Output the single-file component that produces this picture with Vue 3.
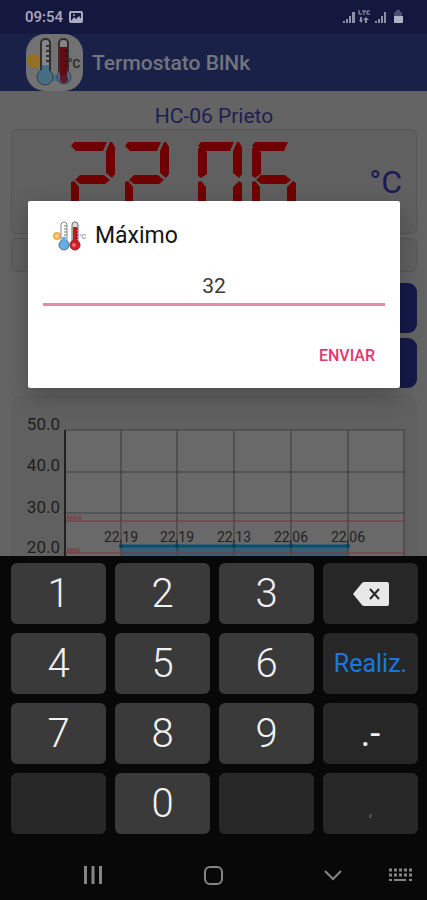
<script setup>
import { ref } from 'vue'

const maximum = ref('32')

const segments = {
  a: '0,4 3,0 36,0 32,9 5,9',
  b: '39,0 41,0 44,5 44,32 41,36 35,31 35,9',
  c: '41,39 44,41 44,70 35,66 35,45',
  d: '5,67 33,67 38,76 3,76',
  e: '0,40 3,39 8,45 8,66 0,72',
  f: '0,6 2,6 9,10 9,32 3,36 0,34',
  g: '4,38 9,33 33,33 39,38 34,42 9,42'
}
const digits = [
  { x: 59, on: 'abged' },
  { x: 113, on: 'abged' },
  { x: 186, on: 'abcdef' },
  { x: 240, on: 'afgcde' }
]

const points = [
  { x: 110, label: '22,19' },
  { x: 166, label: '22,19' },
  { x: 223, label: '22,13' },
  { x: 280, label: '22,06' },
  { x: 337, label: '22,06' }
]
const levels = [
  { y: 35, label: '50.0' },
  { y: 76, label: '40.0' },
  { y: 118, label: '30.0' },
  { y: 158, label: '20.0' }
]

const keys = [
  { text: '1', kind: 'digit' },
  { text: '2', kind: 'digit' },
  { text: '3', kind: 'digit' },
  { text: '', kind: 'side', icon: true, name: 'Borrar' },
  { text: '4', kind: 'digit' },
  { text: '5', kind: 'digit' },
  { text: '6', kind: 'digit' },
  { text: 'Realiz.', kind: 'side done' },
  { text: '7', kind: 'digit' },
  { text: '8', kind: 'digit' },
  { text: '9', kind: 'digit' },
  { text: '.-', kind: 'side symbols' },
  { text: '', kind: 'side', name: 'Vacío' },
  { text: '0', kind: 'digit' },
  { text: '', kind: 'side', name: 'Vacío' },
  { text: ',', kind: 'side comma' }
]

function press(key) {
  if (key.kind === 'digit') maximum.value += key.text
  else if (key.icon) maximum.value = maximum.value.slice(0, -1)
}
</script>

<template>
  <div class="phone">
    <div class="app">
      <div class="status">
        <span class="clock">09:54</span>
        <svg class="photo" viewBox="0 0 14 12">
          <rect x="1" y="1" width="12" height="10" rx="1" fill="none" stroke="currentColor" stroke-width="2" />
          <path d="M2 10l3-4 2 2 3-3 3 4v1z" fill="currentColor" />
          <circle cx="5" cy="4" r="1" fill="currentColor" />
        </svg>
        <svg class="signals" viewBox="0 0 62 14">
          <g fill="#8c90a6">
            <path d="M1 11h2v2H1zM4 9h2v4H4zM7 6h2v7H7zM10 2h3v11h-3z" />
            <path d="M33 11h2v2h-2zM36 9h2v4h-2zM39 6h2v7h-2zM42 2h2v11h-2z" />
            <path d="M23 13v-3h-2l3-3 3 3h-2v3zM18 7h2v3h1l-2 3-2-3h1z" />
            <path d="M17 0v4h3M20 1h4M22 1v4M28 1h-3v3h3" fill="none" stroke="#a4a7ba" stroke-width="1" />
          </g>
          <path d="M52 3q0-1 1-1h1V0h4v2h1q1 0 1 1v3h-8z" fill="#4c5071" />
          <path d="M52 6h9v6q0 1-1 1h-7q-1 0-1-1z" fill="#b0b3c4" />
        </svg>
      </div>

      <header class="toolbar">
        <svg class="logo" viewBox="0 0 57 57">
          <rect width="57" height="57" rx="19" fill="#727272" />
          <circle cx="8" cy="27" r="5" fill="#85724a" stroke="#a36f0b" stroke-width="3" />
          <path d="M8 24v6M6 27h4" stroke="#a36f0b" />
          <path d="M20 44h18" stroke="#466d84" stroke-width="6" />
          <rect x="15" y="5" width="9" height="38" rx="4" fill="#858585" stroke="#303030" stroke-width="2" />
          <circle cx="19" cy="43" r="8" fill="#466d84" stroke="#31424c" />
          <rect x="16" y="31" width="7" height="10" fill="#466d84" />
          <path d="M20 12h3M20 17h3M20 22h3M20 27h3" stroke="#303030" stroke-width="2" />
          <rect x="33" y="5" width="9" height="38" rx="4" fill="#858585" stroke="#303030" stroke-width="2" />
          <circle cx="38" cy="43" r="7" fill="#466d84" stroke="#31424c" />
          <rect x="34" y="13" width="7" height="31" fill="#640b12" />
          <circle cx="38" cy="45" r="4" fill="#5d1b28" />
          <path d="M39 17h3M39 22h3M39 27h3M39 32h3" stroke="#2a1215" stroke-width="2" />
          <text x="42" y="34" font-size="12" font-weight="500" fill="#252525">°C</text>
        </svg>
        <h1>Termostato BlNk</h1>
      </header>

      <main class="content">
        <p class="device">HC-06 Prieto</p>
        <section class="display">
          <svg class="segments" viewBox="0 0 300 103">
            <g v-for="d in digits" :key="d.x" :transform="`translate(${d.x} 12)`" fill="#700000">
              <polygon v-for="s in d.on" :key="s" :points="segments[s]" />
            </g>
            <circle cx="171" cy="84" r="4" fill="#700000" />
          </svg>
          <span class="unit">°C</span>
        </section>
        <div class="strip"></div>
        <div class="actions">
          <button type="button" aria-label="Máximo"></button>
          <button type="button" aria-label="Mínimo"></button>
        </div>
        <section class="panel">
          <svg class="chart" viewBox="0 0 406 200">
            <rect x="54" y="35" width="339" height="165" fill="#696969" />
            <path d="M110 151h227v49H110z" fill="#3b5e77" />
            <path d="M54 35h340M54 77h340M54 118h340" stroke="#414141" />
            <path d="M110 35v165M166 35v165M223 35v165M280 35v165M337 35v165M393 35v165" stroke="#3a3a3a" />
            <path d="M54 126h340M54 158h340" stroke="#78393b" />
            <path d="M110 151h227" stroke="#07506f" stroke-width="3" />
            <circle v-for="p in points" :key="'c' + p.x" :cx="p.x" cy="151" r="2" fill="#063e5d" />
            <path d="M54 35v165" stroke="#202020" stroke-width="2" />
            <text v-for="l in levels" :key="l.label" x="49" :y="l.y" text-anchor="end" class="level">{{ l.label }}</text>
            <text v-for="p in points" :key="'t' + p.x" :x="p.x" y="147" text-anchor="middle" class="reading">{{ p.label }}</text>
            <text x="56" y="125" class="limit">MAX</text>
            <text x="56" y="158" class="limit">MIN</text>
          </svg>
        </section>
      </main>

      <div class="overlay">
        <form class="dialog" role="dialog" aria-labelledby="dialog-title" @submit.prevent>
          <div class="heading">
            <svg class="thermo" viewBox="0 0 34 30">
              <circle cx="4" cy="15" r="3" fill="#fbd38d" stroke="#f5ad42" stroke-width="2" />
              <rect x="8" y="1" width="6" height="22" rx="3" fill="#fff" stroke="#8a8a8a" />
              <circle cx="11" cy="24" r="5" fill="#63aee5" stroke="#587080" />
              <path d="M9 16h4v8H9z" fill="#63aee5" />
              <path d="M11 5h3M11 8h3M11 11h3M11 14h3" stroke="#777" />
              <rect x="19" y="1" width="6" height="22" rx="3" fill="#ddd" stroke="#666" />
              <circle cx="22" cy="24" r="5" fill="#d91d28" stroke="#86242a" />
              <path d="M20 6h4v18h-4z" fill="#c91622" />
              <circle cx="21" cy="24" r="2" fill="#ef6a70" />
              <path d="M23 8h2M23 11h2M23 14h2M23 17h2" stroke="#641119" />
              <text x="26" y="18" font-size="7" fill="#777">°C</text>
            </svg>
            <label id="dialog-title" for="maximum">Máximo</label>
          </div>
          <input id="maximum" v-model="maximum" type="text" inputmode="decimal" />
          <button class="send" type="submit">ENVIAR</button>
        </form>
      </div>
    </div>

    <div class="keyboard">
      <button v-for="(key, i) in keys" :key="i" type="button" class="key" :class="key.kind" :aria-label="key.name" @click="press(key)">
        <svg v-if="key.icon" class="erase" viewBox="0 0 36 24">
          <path d="M0 12L9 1q1-1 2-1h23q2 0 2 2v20q0 2-2 2H11q-1 0-2-1z" fill="#e8e8e8" />
          <path d="M17 7l9 10M26 7l-9 10" stroke="#272727" stroke-width="2" />
        </svg>
        <template v-else>{{ key.text }}</template>
      </button>
    </div>

    <nav class="system">
      <div class="main-keys">
        <button type="button" aria-label="Recientes">
          <svg viewBox="0 0 24 24"><path d="M4.500 3v18M12 3v18M19.500 3v18" stroke="#858585" stroke-width="3" /></svg>
        </button>
        <button type="button" aria-label="Inicio">
          <svg viewBox="0 0 24 24"><rect x="4" y="4" width="17" height="17" rx="5" fill="none" stroke="#858585" stroke-width="2" /></svg>
        </button>
        <button type="button" aria-label="Ocultar teclado">
          <svg viewBox="0 0 24 24"><path d="M4 8l8 8 8-8" fill="none" stroke="#858585" stroke-width="2" /></svg>
        </button>
      </div>
      <button type="button" aria-label="Cambiar teclado">
        <svg viewBox="0 0 24 24">
          <g stroke="#858585" stroke-width="3" stroke-dasharray="3 2">
            <path d="M1 7h23M1 12h23" />
          </g>
          <path d="M1 17h3M6 17h12M21 17h3" stroke="#858585" stroke-width="2" />
        </svg>
      </button>
    </nav>
  </div>
</template>

<style>
body {
  margin: 0;
  background: #080808;
}
</style>

<style scoped>
.phone {
  display: flex;
  flex-direction: column;
  height: 100vh;
  font-family: Roboto, sans-serif;
  background: #080808;
}
.phone * {
  box-sizing: border-box;
}
button {
  border: 0;
  padding: 0;
  font-family: inherit;
}
svg {
  display: block;
}
.app {
  position: relative;
  flex: 1;
  min-height: 0;
  overflow: hidden;
  background: #646464;
}
.status {
  display: flex;
  align-items: center;
  height: 34px;
  padding: 0 23px 0 25px;
  background: #14183f;
  color: #a9acbf;
}
.clock {
  font-size: 15px;
  font-weight: 500;
}
.photo {
  width: 14px;
  height: 12px;
  margin-left: 6px;
}
.signals {
  width: 62px;
  height: 14px;
  margin-left: auto;
}
.toolbar {
  display: flex;
  align-items: center;
  gap: 9px;
  height: 57px;
  padding-left: 26px;
  background: #1a2149;
}
.logo {
  width: 57px;
  height: 57px;
}
h1 {
  margin: 0;
  font-size: 21px;
  font-weight: 500;
  color: #73757d;
}
.content {
  padding: 12px 10px 0 11px;
}
.device {
  margin: 0;
  font-size: 21px;
  line-height: 26px;
  text-align: center;
  color: #1d1e52;
}
.display {
  display: flex;
  align-items: center;
  justify-content: space-between;
  height: 105px;
  padding-right: 14px;
  border: 1px solid #565656;
  border-radius: 6px;
  background: #606060;
}
.segments {
  width: 300px;
  height: 103px;
}
.unit {
  font-size: 32px;
  color: #1a1a58;
}
.strip {
  height: 34px;
  margin-top: 4px;
  border: 1px solid #565656;
  border-radius: 6px;
  background: #606060;
}
.actions {
  display: grid;
  gap: 5px;
  width: 50%;
  margin: 11px 0 0 auto;
}
.actions button {
  height: 50px;
  border-radius: 9px;
  background: #14194a;
}
.panel {
  margin-top: 7px;
  border-radius: 12px;
  background: #606060;
}
.chart {
  width: 100%;
}
.level {
  font-size: 17px;
  fill: #1e1e1e;
}
.reading {
  font-size: 14px;
  fill: #222222;
}
.limit {
  font-size: 7px;
  fill: #852a2d;
}
.overlay {
  position: absolute;
  inset: 32px 0 0;
  display: flex;
  align-items: center;
  padding: 0 27px 0 28px;
}
.dialog {
  display: flex;
  flex-direction: column;
  flex: 1;
  min-width: 0;
  padding: 20px 15px 14px;
  border-radius: 2px;
  background: #ffffff;
  box-shadow: 0 8px 24px rgba(0, 0, 0, 0.25);
}
.heading {
  display: flex;
  align-items: center;
  gap: 8px;
  height: 30px;
  padding-left: 10px;
}
.heading label {
  font-size: 23px;
  line-height: 32px;
  color: #151515;
}
.thermo {
  width: 34px;
  height: 30px;
}
input {
  width: 100%;
  height: 36px;
  margin-top: 19px;
  padding: 0;
  border: 0;
  border-bottom: 3px solid #ef86a8;
  border-radius: 0;
  outline: 0;
  background: transparent;
  font-family: inherit;
  font-size: 21px;
  text-align: center;
  color: #3a3a3a;
}
.send {
  align-self: flex-end;
  height: 36px;
  margin-top: 32px;
  padding: 0 10px;
  background: transparent;
  font-size: 16px;
  font-weight: 500;
  color: #e0386f;
}
.keyboard {
  display: grid;
  grid-template-columns: repeat(4, minmax(0, 1fr));
  grid-auto-rows: 61px;
  gap: 9px;
  padding: 7px 9px 16px 11px;
}
.key {
  display: flex;
  align-items: center;
  justify-content: center;
  border-radius: 6px;
  color: #f2f2f2;
}
.digit {
  background: #3a3a3a;
  font-size: 40px;
  font-weight: 300;
}
.side {
  background: #272727;
}
.done {
  font-size: 25px;
  color: #1878e0;
}
.symbols {
  font-size: 36px;
}
.comma {
  padding-top: 12px;
  font-size: 18px;
  font-weight: 300;
  color: #777777;
}
.erase {
  width: 36px;
  height: 24px;
}
.system {
  display: flex;
  align-items: center;
  height: 50px;
  padding: 0 15px 0 81px;
}
.main-keys {
  display: flex;
  flex: 1;
  justify-content: space-between;
  margin-right: 43px;
}
.system button {
  width: 24px;
  height: 24px;
  background: transparent;
}
.system svg {
  width: 24px;
  height: 24px;
}
</style>
